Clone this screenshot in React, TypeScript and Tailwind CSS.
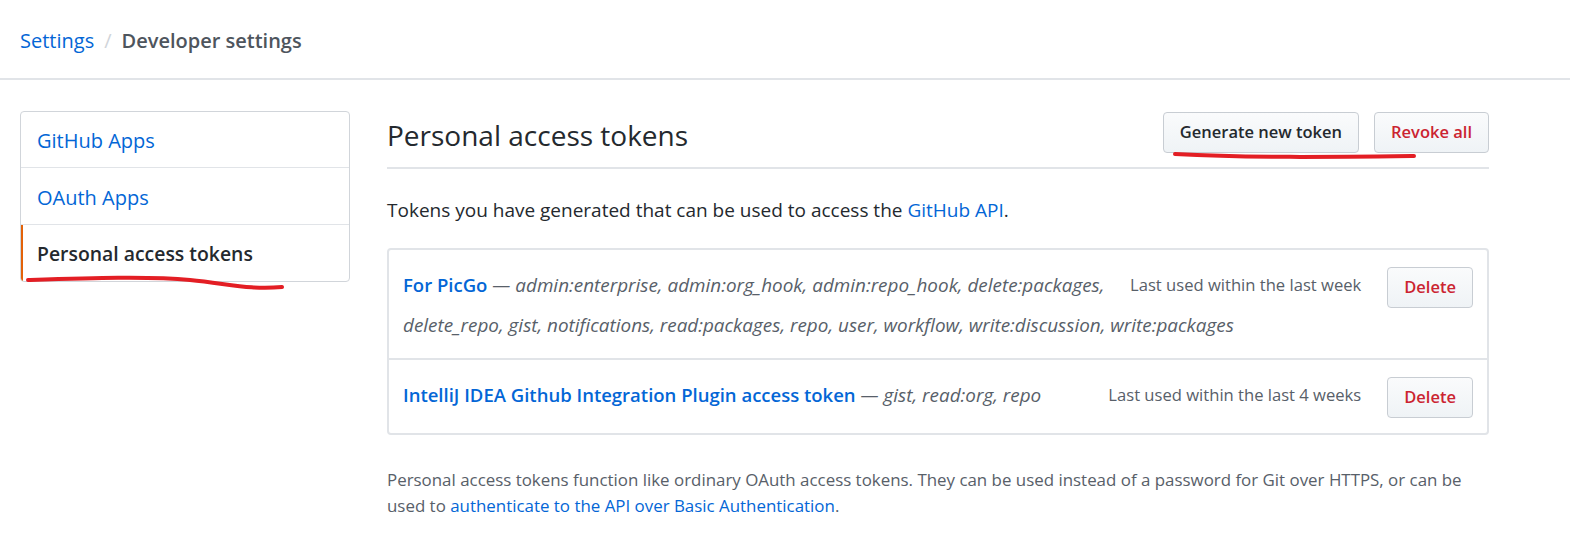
export default function App() {
  const btn = "rounded-[4px] border border-[#c8cdd3] bg-gradient-to-b from-[#fafbfc] to-[#eff3f6] text-[16.5px] font-semibold leading-none";
  return (
    <div className="relative w-[1570px] h-[534px] bg-white overflow-hidden font-['Open_Sans',sans-serif] text-[#24292e]">
      {/* header */}
      <div className="h-[80px] border-b-2 border-[#e1e4e8] flex items-center px-[20px] pt-[4px]">
        <span className="text-[20px] text-[#0366d6]">Settings</span>
        <span className="text-[20px] text-[#d1d5da] mx-[10px]">/</span>
        <span className="text-[20px] font-semibold text-[#4e555d]">Developer settings</span>
      </div>

      <div className="flex pt-[31px] pl-[20px]">
        {/* sidebar */}
        <div className="w-[330px] h-[171px] border border-[#d1d5da] rounded-[4px] flex flex-col self-start overflow-hidden">
          <div className="h-[56px] flex items-center px-[16px] pt-[3px] border-b border-[#e1e4e8] text-[20px] text-[#0366d6]">GitHub Apps</div>
          <div className="h-[57px] flex items-center px-[16px] pt-[3px] border-b border-[#e1e4e8] text-[20px] text-[#0366d6]">OAuth Apps</div>
          <div className="flex-1 flex items-center pl-[14px] pr-[16px] pt-[1px] border-l-[2px] border-[#e36209] text-[19.4px] font-semibold text-[#24292e]">Personal access tokens</div>
        </div>

        {/* main */}
        <div className="ml-[37px] w-[1102px]">
          <div className="flex justify-between items-start h-[58px] border-b-2 border-[#e1e4e8]">
            <h2 className="text-[28px] leading-[48px] font-normal">Personal access tokens</h2>
            <div className="flex gap-[15px] pt-[1px]">
              <button className={`${btn} h-[41px] px-[16px] text-[#24292e]`}>Generate new token</button>
              <button className={`${btn} h-[41px] px-[16px] text-[#cb2431]`}>Revoke all</button>
            </div>
          </div>

          <p className="mt-[27px] text-[19px] leading-[28px]">
            Tokens you have generated that can be used to access the <span className="text-[#0366d6]">GitHub API</span>.
          </p>

          <div className="mt-[24px] border-2 border-[#e1e4e8] rounded-[4px]">
            <div className="flow-root px-[14px] pt-[15px] pb-[12px] border-b-2 border-[#e1e4e8] leading-[39px]">
              <button className={`${btn} float-right mt-[2px] ml-[26px] h-[41px] px-[16px] text-[#cb2431]`}>Delete</button>
              <span className="float-right ml-[14px] text-[16.6px] text-[#586069]">Last used within the last week</span>
              <span className="text-[18.5px] font-semibold text-[#0366d6]">For PicGo</span>
              <span className="text-[18.9px] italic text-[#586069]"> — admin:enterprise, admin:org_hook, admin:repo_hook, delete:packages, delete_repo, gist, notifications, read:packages, repo, user, workflow, write:discussion, write:packages</span>
            </div>
            <div className="flow-root px-[14px] pt-[15px] pb-[15px] leading-[39px]">
              <button className={`${btn} float-right mt-[2px] ml-[26px] h-[41px] px-[16px] text-[#cb2431]`}>Delete</button>
              <span className="float-right ml-[14px] text-[16.6px] text-[#586069]">Last used within the last 4 weeks</span>
              <span className="text-[18.5px] font-semibold text-[#0366d6]">IntelliJ IDEA Github Integration Plugin access token</span>
              <span className="text-[18.9px] italic text-[#586069]"> — gist, read:org, repo</span>
            </div>
          </div>

          <p className="mt-[32px] text-[16.9px] leading-[26px] text-[#586069]">
            Personal access tokens function like ordinary OAuth access tokens. They can be used instead of a password for Git over HTTPS, or can be used to <span className="text-[#0366d6]">authenticate to the API over Basic Authentication</span>.
          </p>
        </div>
      </div>

      {/* red annotation marks */}
      <svg className="absolute left-0 top-0 pointer-events-none" width="1570" height="534">
        <path d="M28 280 C 90 278, 150 276, 190 280 C 230 284, 250 290, 282 287" stroke="#e31e24" strokeWidth="4" fill="none" strokeLinecap="round" />
        <path d="M1175 154 C 1250 158, 1330 157, 1414 156" stroke="#e31e24" strokeWidth="4" fill="none" strokeLinecap="round" />
      </svg>
    </div>
  );
}
